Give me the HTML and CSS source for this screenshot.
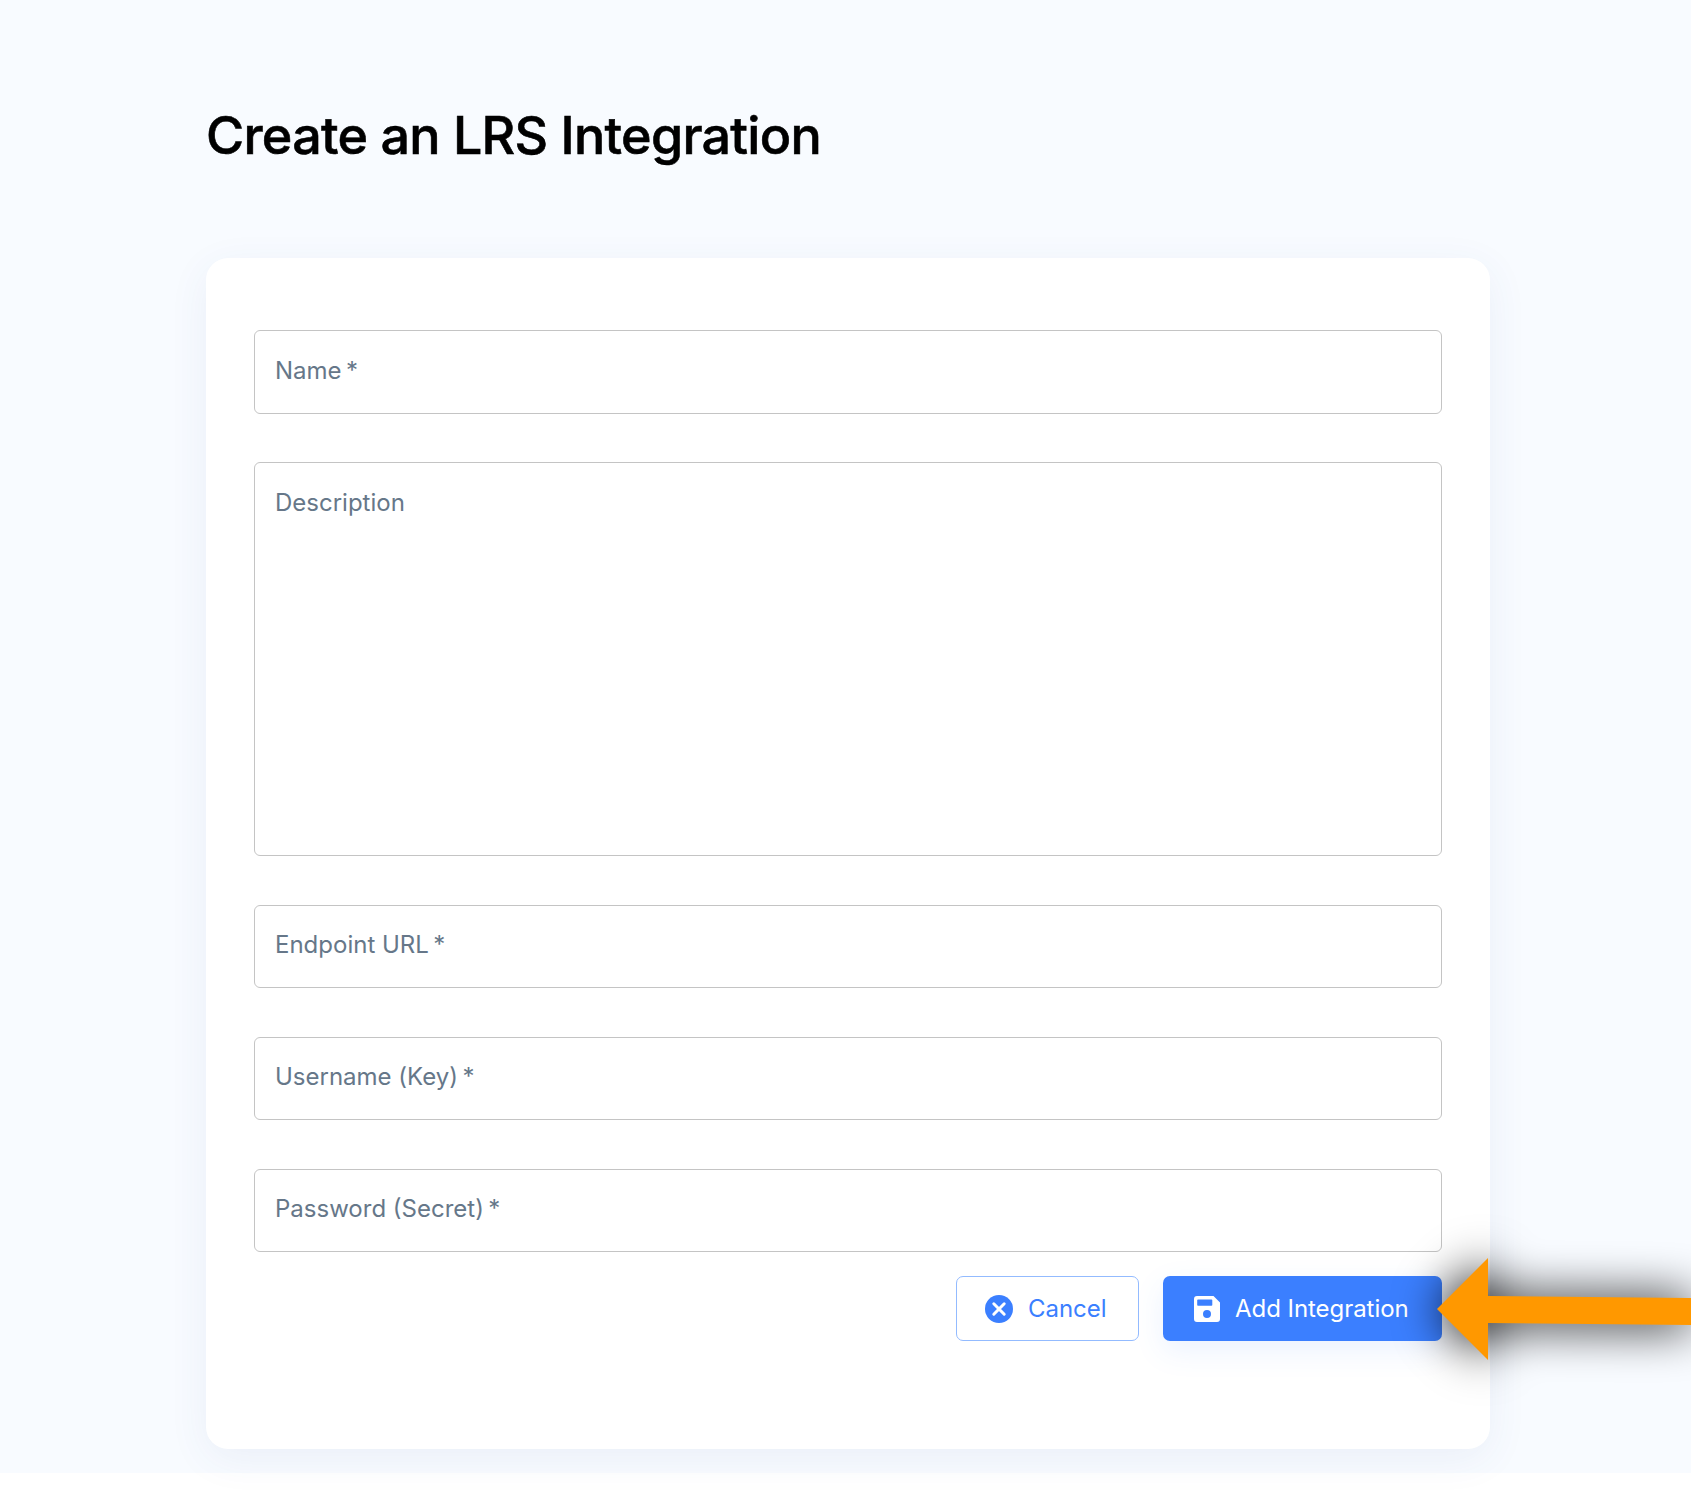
FILE: index.html
```html
<!DOCTYPE html>
<html lang="en">
<head>
<meta charset="utf-8">
<title>Create an LRS Integration</title>
<link rel="stylesheet" href="styles.css">
</head>
<body>
<main class="page">
  <h1 class="title">Create an LRS Integration</h1>
  <form class="card">
    <div class="field field-first"><span class="label">Name&thinsp;*</span></div>
    <div class="field field-area"><span class="label">Description</span></div>
    <div class="field"><span class="label">Endpoint URL&thinsp;*</span></div>
    <div class="field"><span class="label">Username (Key)&thinsp;*</span></div>
    <div class="field"><span class="label">Password (Secret)&thinsp;*</span></div>
    <div class="actions">
      <button type="button" class="btn btn-cancel">
        <svg class="icon" viewBox="0 0 28 28"><circle cx="14" cy="14" r="14" fill="#3b7fff"/><path d="M8.800 8.800l10.400 10.400M19.200 8.800l-10.400 10.400" stroke="#fff" stroke-width="3" stroke-linecap="round"/></svg>
        Cancel
      </button>
      <button type="button" class="btn btn-add">
        <svg class="icon" viewBox="0 0 26 26"><path fill-rule="evenodd" fill="#fff" d="M3 0h16.500L26 6.500V23a3 3 0 0 1-3 3H3a3 3 0 0 1-3-3V3a3 3 0 0 1 3-3zM4 3.500a.8.8 0 0 0-.8.8V9a.8.8 0 0 0 .8.8h13.500a.8.8 0 0 0 .8-.8V4.300a.8.8 0 0 0-.8-.8zM13 14a4 4 0 1 0 0 8 4 4 0 0 0 0-8z"/></svg>
        Add Integration
      </button>
    </div>
  </form>
</main>
<svg class="arrow" viewBox="0 0 300 150"><polygon points="17,66 68,15 68,53 271,55 271,82 68,80 68,117" fill="#ff9800"/></svg>
</body>
</html>
```
FILE: styles.css
```css
html, body { margin: 0; background: #fff; }
body { position: relative; font-family: Inter, "Liberation Sans", sans-serif; height: 1490px; overflow: hidden; }
.page { background: #f8fbff; height: 1473px; padding: 103px 201px 0 206px; box-sizing: border-box; }
.title { margin: 0 0 89px; font-size: 52px; line-height: 66px; font-weight: 500; color: #000; letter-spacing: -0.72px; -webkit-text-stroke: 0.6px #000; }
.card { background: #fff; border-radius: 22px; height: 1191px; box-sizing: border-box; padding: 72px 48px 0; display: flex; flex-direction: column; gap: 49px; box-shadow: 0 10px 40px rgba(60, 80, 160, 0.07); }
.field { height: 83px; box-sizing: border-box; border: 1px solid #c4c4c4; border-radius: 6px; padding: 24px 20px 0; background: #fff; }
.field-first { height: 84px; padding-top: 25px; margin-bottom: -1px; }
.field-area { height: 394px; padding-top: 25px; }
.label { font-size: 24px; line-height: 29px; color: #667789; display: block; }
.actions { display: flex; justify-content: flex-end; gap: 24px; margin-top: -25px; }
.btn { height: 65px; box-sizing: border-box; border-radius: 7px; font: 400 24px/30px Inter, "Liberation Sans", sans-serif; letter-spacing: -0.05px; display: flex; align-items: center; gap: 15px; }
.btn-cancel { width: 183px; padding: 0 0 0 28px; background: #fff; border: 1px solid #93bbff; color: #3b7fff; }
.btn-add { width: 279px; padding: 0 0 0 31px; background: #3b7fff; border: 0; color: #fff; box-shadow: 0 10px 30px rgba(59, 127, 255, 0.1); }
.icon { width: 28px; height: 28px; flex: none; }
.btn-add .icon { width: 26px; height: 26px; }
.arrow { position: absolute; left: 1420px; top: 1243px; width: 300px; height: 150px; overflow: visible; filter: drop-shadow(0 1px 24px #000); }
```
